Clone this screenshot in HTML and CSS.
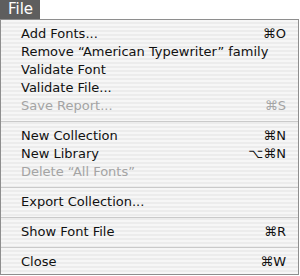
FILE: index.html
```html
<!DOCTYPE html>
<html>
<head>
<meta charset="utf-8">
<link rel="stylesheet" href="styles.css">
</head>
<body>
<div class="menubar"><span class="title">File</span></div>
<div class="menu">
  <div class="item"><span>Add Fonts...</span><span class="key">⌘O</span></div>
  <div class="item"><span>Remove “American Typewriter” family</span></div>
  <div class="item"><span>Validate Font</span></div>
  <div class="item"><span>Validate File...</span></div>
  <div class="item disabled"><span>Save Report...</span><span class="key">⌘S</span></div>
  <div class="sep"></div>
  <div class="item"><span>New Collection</span><span class="key">⌘N</span></div>
  <div class="item"><span>New Library</span><span class="key">⌥⌘N</span></div>
  <div class="item disabled"><span>Delete “All Fonts”</span></div>
  <div class="sep"></div>
  <div class="item"><span>Export Collection...</span></div>
  <div class="sep"></div>
  <div class="item"><span>Show Font File</span><span class="key">⌘R</span></div>
  <div class="sep"></div>
  <div class="item"><span>Close</span><span class="key">⌘W</span></div>
</div>
</body>
</html>
```
FILE: styles.css
```css
html, body {
  margin: 0;
  padding: 0;
  background: #ffffff;
}
body {
  font-family: "DejaVu Sans", "Liberation Sans", sans-serif;
  font-size: 13px;
  width: 300px;
  height: 276px;
  overflow: hidden;
}
.menubar {
  height: 19px;
  display: flex;
}
.title {
  background: #5e5e5e;
  color: #ffffff;
  width: 40px;
  height: 19px;
  line-height: 19px;
  font-size: 15px;
  padding-left: 8px;
  box-sizing: border-box;
}
.menu {
  width: 299px;
  box-sizing: border-box;
  border: 1px solid #8e8e8e;
  padding: 5px 0 3px 0;
  background: repeating-linear-gradient(to bottom, #f6f6f6 0 2px, #ececec 2px 4px);
}
.item {
  height: 18px;
  line-height: 18px;
  display: flex;
  justify-content: space-between;
  padding: 0 12px 0 20px;
  color: #111111;
}
.item.disabled {
  color: #a4a4a4;
}
.sep {
  height: 12px;
  display: flex;
  align-items: center;
}
.sep::before {
  content: "";
  display: block;
  width: 100%;
  height: 1px;
  background: #cacaca;
}
```
